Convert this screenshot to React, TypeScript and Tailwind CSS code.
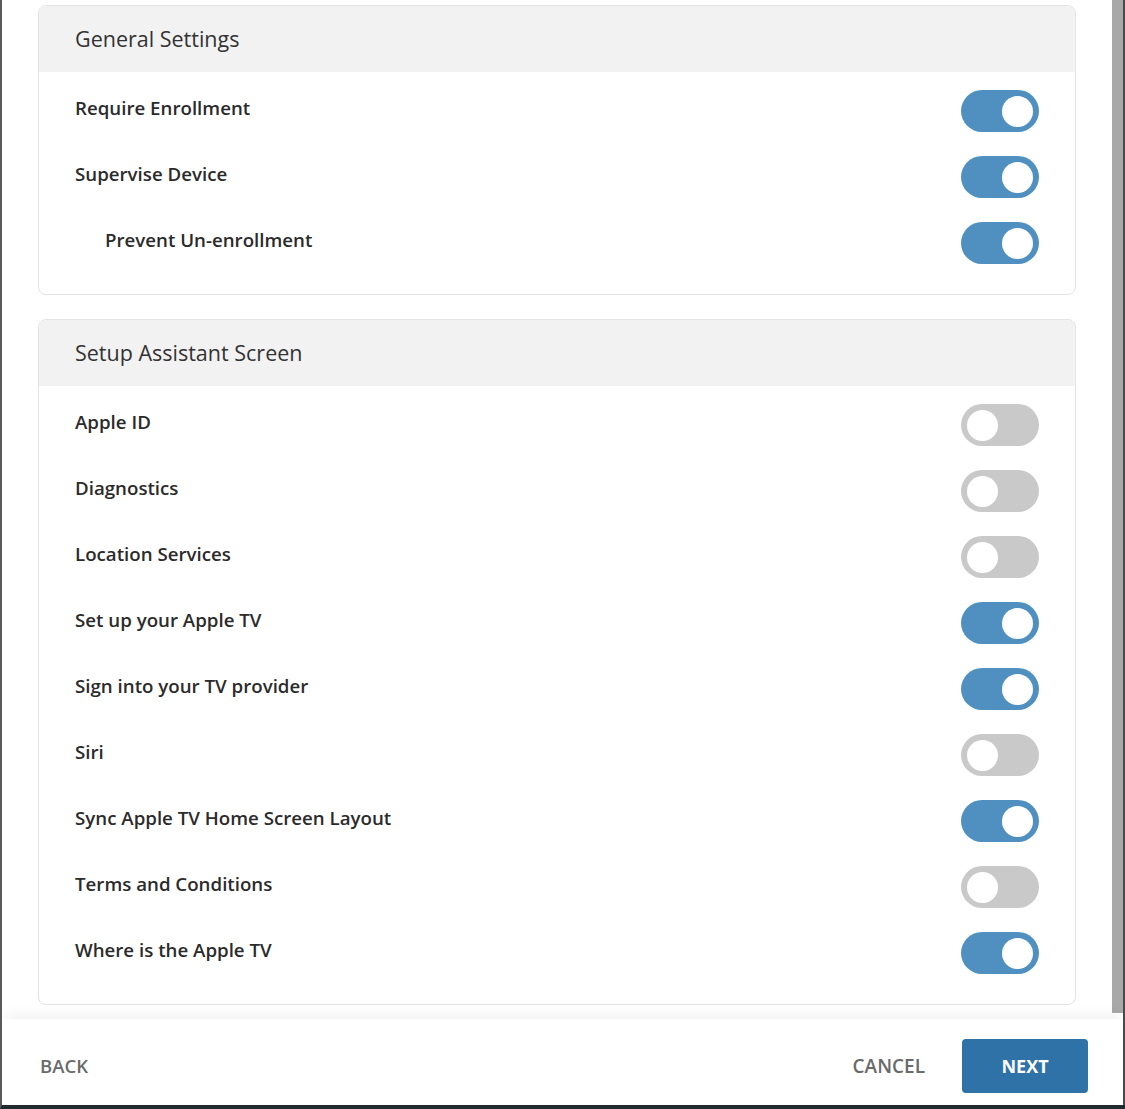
import React from "react";

type Item = { label: string; on: boolean; indent?: boolean };

const general: Item[] = [
  { label: "Require Enrollment", on: true },
  { label: "Supervise Device", on: true },
  { label: "Prevent Un-enrollment", on: true, indent: true },
];

const setup: Item[] = [
  { label: "Apple ID", on: false },
  { label: "Diagnostics", on: false },
  { label: "Location Services", on: false },
  { label: "Set up your Apple TV", on: true },
  { label: "Sign into your TV provider", on: true },
  { label: "Siri", on: false },
  { label: "Sync Apple TV Home Screen Layout", on: true },
  { label: "Terms and Conditions", on: false },
  { label: "Where is the Apple TV", on: true },
];

function Toggle({ on }: { on: boolean }) {
  return (
    <div
      className={
        on
          ? "mt-[6px] flex h-[42px] w-[78px] items-center justify-end rounded-full bg-[#4f90c0] px-[6px]"
          : "mt-[6px] flex h-[42px] w-[78px] items-center justify-start rounded-full bg-[#c9c9c9] px-[6px]"
      }
    >
      <div className="h-[31px] w-[31px] rounded-full bg-white" />
    </div>
  );
}

function Card({ title, items }: { title: string; items: Item[] }) {
  return (
    <div className="overflow-hidden rounded-[8px] border border-[#e4e4e4] bg-white">
      <div className="flex h-[66px] items-center bg-[#f2f2f2] px-[36px] text-[21.5px] text-[#333]">
        {title}
      </div>
      <div className="pb-[21px] pt-[3px]">
        {items.map((it) => (
          <div key={it.label} className="flex h-[66px] items-center justify-between pl-[36px] pr-[36px]">
            <span
              className={
                it.indent
                  ? "pl-[30px] text-[18.7px] font-semibold text-[#2b2b2b]"
                  : "text-[18.7px] font-semibold text-[#2b2b2b]"
              }
            >
              {it.label}
            </span>
            <Toggle on={it.on} />
          </div>
        ))}
      </div>
    </div>
  );
}

export default function App() {
  return (
    <div
      className="flex h-[1109px] w-[1125px] flex-col overflow-hidden border-b-[4px] border-l-[2px] border-b-[#1f2a31] border-l-[#5a5a5a] bg-white"
      style={{ fontFamily: "'Open Sans', 'Noto Sans', sans-serif" }}
    >
      <div className="flex h-[1019px] shrink-0">
        <div className="flex flex-1 flex-col gap-[24px] pl-[36px] pr-[36px] pt-[5px]">
          <Card title="General Settings" items={general} />
          <Card title="Setup Assistant Screen" items={setup} />
        </div>
        <div className="flex w-[13px] shrink-0">
          <div className="h-[1013px] w-[11px] bg-[#a8a8a8]" />
          <div className="w-[2px] bg-[#4a4a4a]" />
        </div>
      </div>
      <div className="relative flex flex-1 items-center justify-between bg-white pl-[38px] pr-[37px] pt-[8px] shadow-[0_-8px_12px_-4px_rgba(0,0,0,0.06)]">
        <span className="text-[18.5px] font-semibold text-[#6a6a6a]">BACK</span>
        <div className="flex items-center gap-[37px]">
          <span className="text-[19px] font-semibold text-[#6a6a6a]">CANCEL</span>
          <div className="flex h-[54px] w-[126px] items-center justify-center rounded-[4px] bg-[#2e72a8] text-[18px] font-bold text-white">
            NEXT
          </div>
        </div>
        <div className="absolute bottom-0 right-0 top-0 w-[2px] bg-[#4a4a4a]" />
      </div>
    </div>
  );
}
